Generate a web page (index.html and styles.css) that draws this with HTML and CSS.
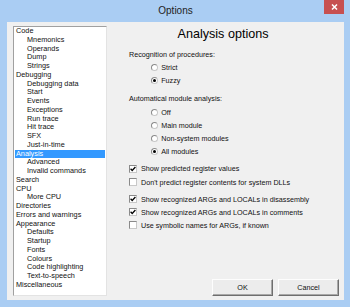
FILE: index.html
```html
<!DOCTYPE html>
<html lang="en">
<head>
    <meta charset="UTF-8">
    <meta name="viewport" content="width=device-width, initial-scale=1.0">
    <title>Options</title>
    <link rel="stylesheet" href="styles.css">
</head>
<body>
    <div class="window">
        <div class="titlebar">
            <span></span>
            <span class="title">Options</span>
            <button class="close" type="button">
                <svg width="7" height="6" viewBox="0 0 7 6"><path d="M1 0.5 L6 5.5 M6 0.5 L1 5.5" stroke="#fff" stroke-width="1.5" fill="none"/></svg>
            </button>
        </div>
        <div class="client">
            <ul class="tree">
                <li>Code</li>
                <li class="sub">Mnemonics</li>
                <li class="sub">Operands</li>
                <li class="sub">Dump</li>
                <li class="sub">Strings</li>
                <li>Debugging</li>
                <li class="sub">Debugging data</li>
                <li class="sub">Start</li>
                <li class="sub">Events</li>
                <li class="sub">Exceptions</li>
                <li class="sub">Run trace</li>
                <li class="sub">Hit trace</li>
                <li class="sub">SFX</li>
                <li class="sub">Just-in-time</li>
                <li class="selected">Analysis</li>
                <li class="sub">Advanced</li>
                <li class="sub">Invalid commands</li>
                <li>Search</li>
                <li>CPU</li>
                <li class="sub">More CPU</li>
                <li>Directories</li>
                <li>Errors and warnings</li>
                <li>Appearance</li>
                <li class="sub">Defaults</li>
                <li class="sub">Startup</li>
                <li class="sub">Fonts</li>
                <li class="sub">Colours</li>
                <li class="sub">Code highlighting</li>
                <li class="sub">Text-to-speech</li>
                <li>Miscellaneous</li>
            </ul>

            <div class="panel">
                <h1>Analysis options</h1>

                <div class="label first">Recognition of procedures:</div>
                <div class="radio"><span class="circle"></span>Strict</div>
                <div class="radio"><span class="circle on"></span>Fuzzy</div>

                <div class="label second">Automatical module analysis:</div>
                <div class="radio"><span class="circle"></span>Off</div>
                <div class="radio"><span class="circle"></span>Main module</div>
                <div class="radio"><span class="circle"></span>Non-system modules</div>
                <div class="radio"><span class="circle on"></span>All modules</div>

                <div class="check group"><span class="box"><svg width="6" height="6" viewBox="0 0 6 6"><path d="M0.6 2.8 L2.2 4.5 L5.4 1" stroke="#000" stroke-width="1.3" fill="none"/></svg></span>Show predicted register values</div>
                <div class="check"><span class="box"></span>Don't predict register contents for system DLLs</div>

                <div class="check group2"><span class="box"><svg width="6" height="6" viewBox="0 0 6 6"><path d="M0.6 2.8 L2.2 4.5 L5.4 1" stroke="#000" stroke-width="1.3" fill="none"/></svg></span>Show recognized ARGs and LOCALs in disassembly</div>
                <div class="check"><span class="box"><svg width="6" height="6" viewBox="0 0 6 6"><path d="M0.6 2.8 L2.2 4.5 L5.4 1" stroke="#000" stroke-width="1.3" fill="none"/></svg></span>Show recognized ARGs and LOCALs in comments</div>
                <div class="check"><span class="box"></span>Use symbolic names for ARGs, if known</div>

                <div class="buttons">
                    <button type="button">OK</button>
                    <button type="button">Cancel</button>
                </div>
            </div>
        </div>
    </div>
</body>
</html>
```

FILE: styles.css
```css
body {
    margin: 0;
    font-family: "Liberation Sans", Arial, sans-serif;
    color: #111;
}

.window {
    width: 350px;
    height: 307px;
    box-sizing: border-box;
    background-color: #aacdf3; /* light blue frame */
    padding: 0 6px 7px 7px;
    display: flex;
    flex-direction: column;
}

.titlebar {
    height: 22px;
    display: grid;
    grid-template-columns: 1fr auto 1fr;
    align-items: start;
}

.title {
    line-height: 22px;
    font-size: 10px;
    color: #222;
}

.close {
    justify-self: end;
    width: 20px;
    height: 14px;
    padding: 0;
    border: none;
    background-color: #c75050;
    display: flex;
    align-items: center;
    justify-content: center;
}

.client {
    flex: 1;
    display: flex;
    background-color: #f0f0f0;
    padding: 4px 5px 4px 6px;
}

.tree {
    width: 94px;
    box-sizing: border-box;
    margin: 0;
    padding: 0 1px;
    list-style: none;
    background: #fff;
    border: 1px solid;
    border-color: #a0a0a0 #e3e3e3 #e3e3e3 #a0a0a0;
    font-size: 7.3px;
    line-height: 8.75px;
    white-space: nowrap;
}

.tree li {
    padding-left: 1px;
}

.tree .sub {
    padding-left: 12px;
}

.tree .selected {
    background-color: #3399ff;
    color: #fff;
}

.panel {
    flex: 1;
    display: flex;
    flex-direction: column;
    font-size: 7.2px;
}

h1 {
    margin: 1px 0 0;
    font-size: 12.6px;
    font-weight: normal;
    line-height: 14px;
    text-align: center;
    color: #000;
}

.label, .radio, .check {
    height: 13.1px;
    line-height: 13.1px;
    margin-left: 22px;
    white-space: nowrap;
}

.label.first { margin-top: 6.5px; }
.label.second { margin-top: 5.7px; }
.check.group { margin-top: 4.5px; }
.check.group2 { margin-top: 4px; }

.radio {
    margin-left: 43.7px;
    display: flex;
    align-items: center;
    gap: 3.5px;
}

.circle {
    width: 7px;
    height: 7px;
    box-sizing: border-box;
    border: 1px solid;
    border-color: #8a8a8a #c8c8c8 #c8c8c8 #8a8a8a;
    border-radius: 50%;
    background: #fff;
    display: flex;
    align-items: center;
    justify-content: center;
}

.circle.on::after {
    content: "";
    width: 3px;
    height: 3px;
    border-radius: 50%;
    background: #000;
}

.check {
    display: flex;
    align-items: center;
    gap: 4px;
}

.box {
    width: 8px;
    height: 8px;
    box-sizing: border-box;
    border: 1px solid;
    border-color: #8a8a8a #c8c8c8 #c8c8c8 #8a8a8a;
    background: #fff;
    display: flex;
    align-items: center;
    justify-content: center;
}

.buttons {
    margin-top: auto;
    display: flex;
    justify-content: flex-end;
    gap: 5px;
}

.buttons button {
    width: 61px;
    height: 17px;
    padding: 0;
    font-family: inherit;
    font-size: 7.2px;
    color: #111;
    background: #ececec;
    border: 1px solid;
    border-color: #fdfdfd #6e6e6e #6e6e6e #fdfdfd;
    box-shadow: inset -1px -1px #a8a8a8;
}
```
